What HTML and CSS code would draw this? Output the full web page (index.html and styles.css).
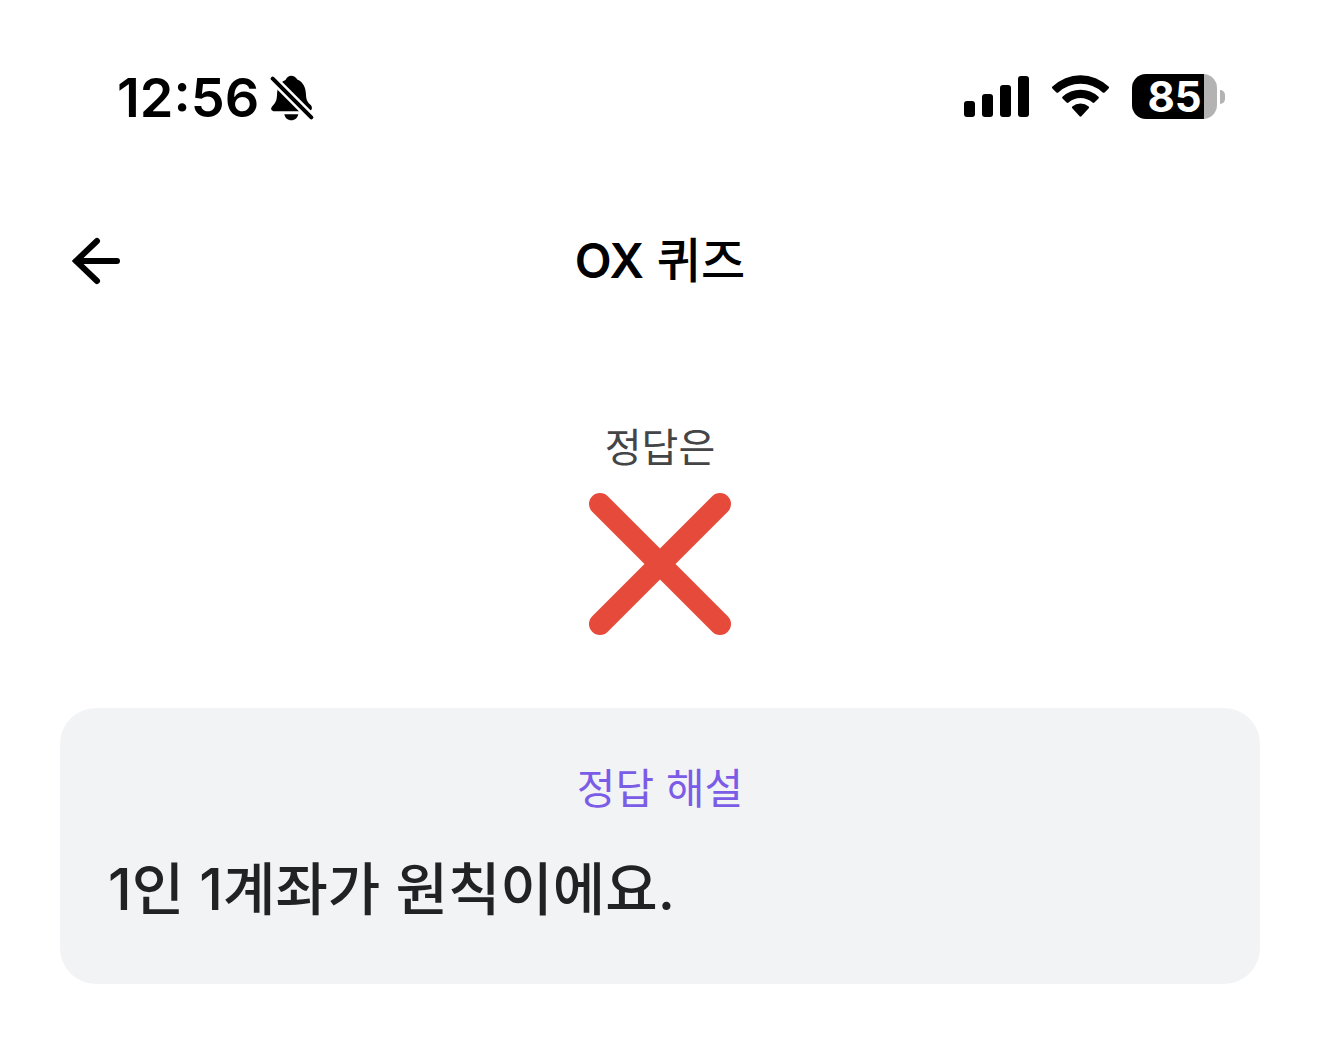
FILE: index.html
```html
<!DOCTYPE html>
<html lang="ko">
  <head>
    <meta charset="UTF-8" />
    <meta name="viewport" content="width=device-width, initial-scale=1" />
    <title>OX 퀴즈</title>
    <link rel="stylesheet" href="styles.css" />
  </head>
  <body>
    <div class="status-bar">
      <div class="status-left">
        <time class="clock">12:56</time>
        <svg class="bell" width="44" height="46" viewBox="0 0 44 46" aria-hidden="true">
          <path d="M15.5 5C17 2 19 .7 21.3 .7S26 2 27.3 4.5C33 7 35.8 12 36 20C36.2 25.5 38 27.5 40.2 29.5C43 32 42.5 36.3 38 36.3H5C1 36.3 0 33.5 2.5 31C5 28.5 6.8 26 7 20C7.2 12 10 7 15.5 5Z" />
          <path d="M14.3 39.3H28.3C27.5 43 25 45.3 21.3 45.3S15 43 14.3 39.3Z" />
          <path class="bell-gap" d="M-1 0L45 46" />
          <path class="bell-slash" d="M2.7 3.7L41.3 42.3" />
        </svg>
      </div>
      <div class="status-right">
        <svg width="65" height="42" viewBox="0 0 65 42" aria-hidden="true">
          <rect x="0" y="25" width="11" height="16" rx="3" />
          <rect x="18" y="18" width="11" height="23" rx="3" />
          <rect x="36" y="9" width="11" height="32" rx="3" />
          <rect x="54" y="0" width="11" height="41" rx="3" />
        </svg>
        <svg width="57" height="44" viewBox="0 0 57 44" aria-hidden="true">
          <path d="M.5 11.6A40 40 0 0 1 56.5 11.6Q57.5 12.5 56.6 13.4L52.6 17.4Q51.7 18.3 50.7 17.4A33 33 0 0 0 6.3 17.4Q5.3 18.3 4.4 17.4L.4 13.4Q-.5 12.5 .5 11.6Z" />
          <path d="M10.5 21.7A26.5 26.5 0 0 1 46.5 21.7Q47.4 22.6 46.5 23.5L42.4 27.6Q41.5 28.5 40.5 27.6A18 18 0 0 0 16.5 27.6Q15.5 28.5 14.6 27.6L10.5 23.5Q9.6 22.6 10.5 21.7Z" />
          <path d="M20.3 31.5A13 13 0 0 1 36.7 31.5Q37.6 32.4 36.7 33.3L29.4 41.3Q28.5 42.2 27.6 41.3L20.3 33.3Q19.4 32.4 20.3 31.5Z" />
        </svg>
        <div class="battery">
          <span class="battery-level">85</span>
          <span class="battery-tip"></span>
        </div>
      </div>
    </div>

    <header class="header">
      <button class="back" type="button" aria-label="뒤로">
        <svg width="48" height="48" viewBox="0 0 48 48" aria-hidden="true">
          <path d="M25 4L4 24L25 44M4 24H45" />
        </svg>
      </button>
      <h1 class="title"><span class="title-ox">OX</span> 퀴즈</h1>
    </header>

    <main class="content">
      <section class="answer">
        <p class="answer-label">정답은</p>
        <svg class="answer-mark" width="142" height="142" viewBox="0 0 142 142" role="img" aria-label="X">
          <path d="M11 11L131 131M131 11L11 131" />
        </svg>
      </section>

      <section class="card">
        <h2 class="card-title">정답 해설</h2>
        <p class="card-text">1인 1계좌가 원칙이에요.</p>
      </section>
    </main>
  </body>
</html>
```

FILE: styles.css
```css
* {
  box-sizing: border-box;
}

body {
  margin: 0;
  background: #fff;
  color: #000;
  font-family: Inter, 'Noto Sans CJK KR', sans-serif;
}

h1,
h2,
p {
  margin: 0;
}

svg {
  display: block;
}

.status-bar {
  display: flex;
  justify-content: space-between;
  padding: 63px 95px 0 117px;
}

.status-left,
.status-right {
  display: flex;
  align-items: center;
}

.status-left {
  gap: 11px;
  height: 70px;
}

.status-right {
  gap: 23px;
  height: 67px;
}

.clock {
  font-size: 54px;
  font-weight: 600;
  line-height: 68px;
}

.bell-gap,
.bell-slash {
  fill: none;
  stroke-linecap: round;
}

.bell-gap {
  stroke: #fff;
  stroke-width: 9;
}

.bell-slash {
  stroke: #000;
  stroke-width: 4;
}

.battery {
  display: flex;
  align-items: center;
  gap: 3px;
}

.battery-level {
  width: 85px;
  height: 45px;
  border-radius: 14px;
  background: linear-gradient(to right, #000 72px, #b3b3b3 72px);
  color: #fff;
  font-size: 42px;
  font-weight: 700;
  line-height: 46px;
  text-align: center;
}

.battery-tip {
  width: 5px;
  height: 14px;
  border-radius: 0 7px 7px 0;
  background: #b3b3b3;
}

.header {
  display: grid;
  grid-template-columns: 48px 1fr 48px;
  align-items: center;
  height: 144px;
  margin-top: 56px;
  padding: 0 72px;
}

.back {
  padding: 0;
  border: none;
  background: none;
  cursor: pointer;
}

.back path {
  fill: none;
  stroke: #000;
  stroke-width: 6;
  stroke-linecap: round;
  stroke-linejoin: miter;
}

.title {
  font-size: 48px;
  font-weight: 500;
  line-height: 72px;
  text-align: center;
}

.title-ox {
  font-weight: 600;
}

.content {
  padding: 84px 60px 54px;
}

.answer {
  display: flex;
  flex-direction: column;
  align-items: center;
  gap: 14px;
}

.answer-label {
  color: #444547;
  font-size: 40px;
  font-weight: 400;
  line-height: 62px;
}

.answer-mark path {
  fill: none;
  stroke: #e64a3b;
  stroke-width: 22;
  stroke-linecap: round;
}

.card {
  margin-top: 73px;
  padding: 48px 48px 52px;
  border-radius: 36px;
  background: #f2f3f5;
}

.card-title {
  color: #7b5ce6;
  font-size: 42px;
  font-weight: 400;
  line-height: 66px;
  text-align: center;
}

.card-text {
  margin-top: 26px;
  color: #212224;
  font-size: 57px;
  font-weight: 500;
  line-height: 84px;
}
```
